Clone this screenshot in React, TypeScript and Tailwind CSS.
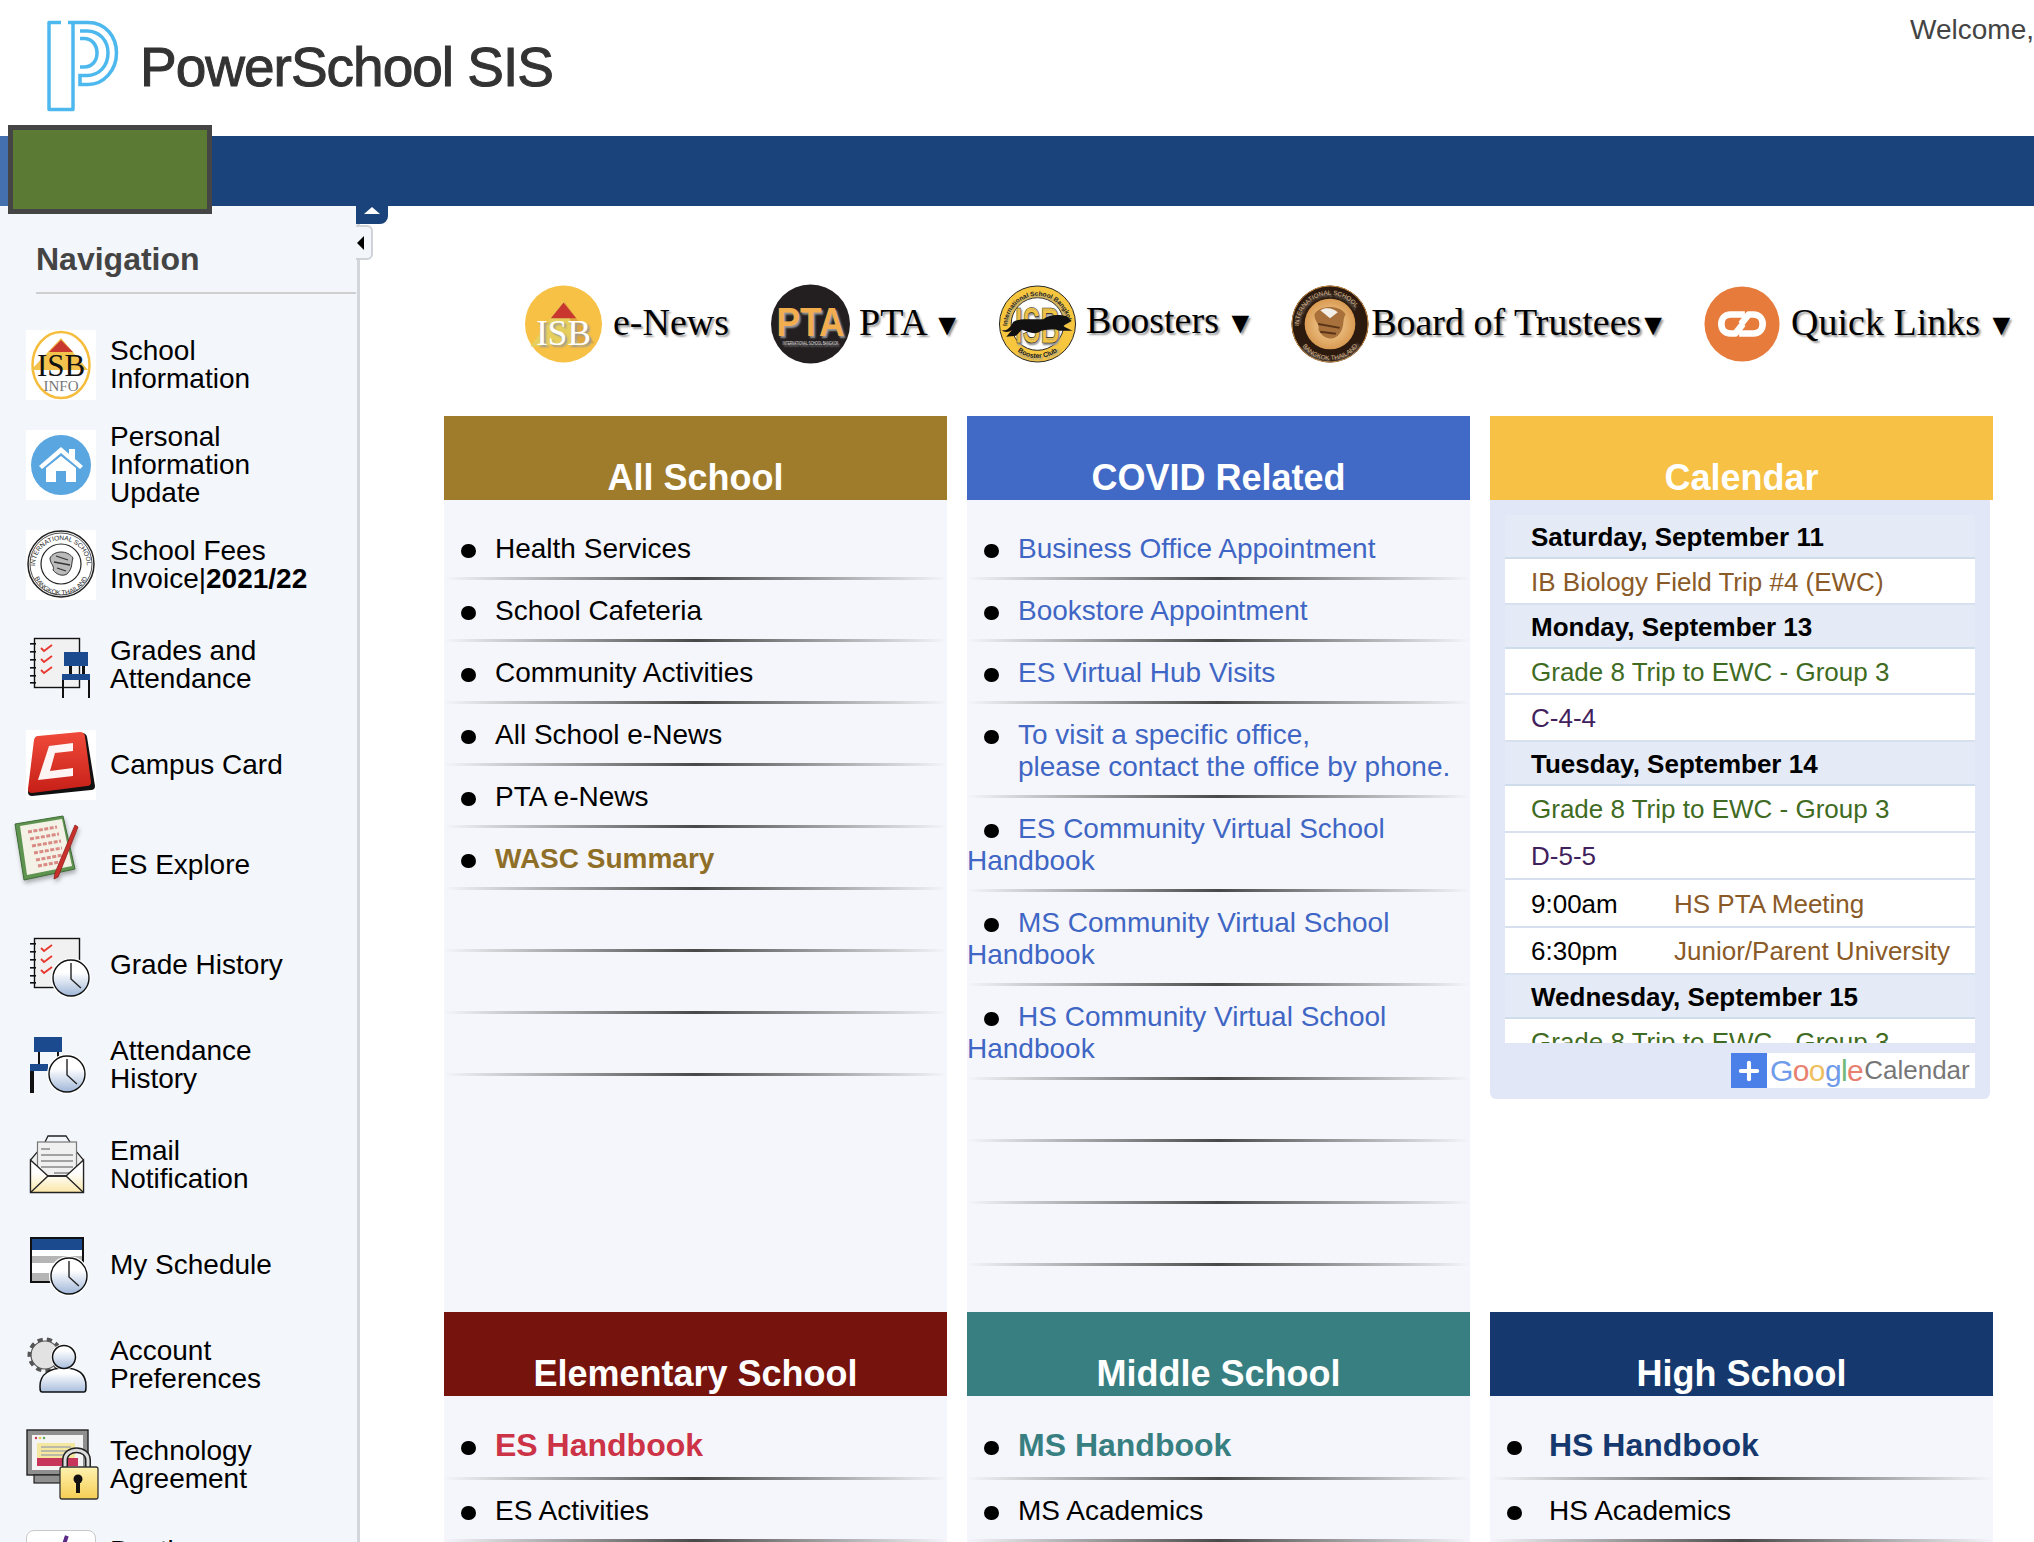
import { Plus } from "lucide-react";
import type { ReactNode } from "react";

const Clock = ({ cx, cy, r }: { cx: number; cy: number; r: number }) => (
  <g>
    <defs>
      <linearGradient id="clockFill" x1="0" y1="0" x2="0" y2="1">
        <stop offset="0.35" stopColor="#ffffff" />
        <stop offset="1" stopColor="#9fb6d8" />
      </linearGradient>
    </defs>
    <circle cx={cx} cy={cy} r={r + 2} fill="#fff" />
    <circle cx={cx} cy={cy} r={r} fill="url(#clockFill)" stroke="#111" strokeWidth="1.4" />
    <path d={`M${cx} ${cy - r + 3}V${cy + 1}L${cx + r * 0.55} ${cy + r * 0.55}`} fill="none" stroke="#222" strokeWidth="1.4" />
  </g>
);

const Checklist = () => (
  <g>
    <rect x="8.5" y="8.5" width="45" height="49" fill="#f1f1f1" stroke="#111" strokeWidth="1.4" />
    {[13, 21, 29, 37, 45, 52].map((y) => (
      <rect key={y} x="4" y={y} width="6" height="1.6" fill="#111" />
    ))}
    {[14, 25, 36].map((y) => (
      <path key={y} d={`M15 ${y + 4}l3 3l8 -6`} fill="none" stroke="#e8372f" strokeWidth="1.8" />
    ))}
  </g>
);

const GradesIcon = () => (
  <svg viewBox="0 0 70 70" className="h-full w-full">
    <Checklist />
    <rect x="38" y="22" width="24" height="14" fill="#1b4a8f" />
    <rect x="43" y="36" width="3" height="9" fill="#111" />
    <rect x="56" y="36" width="3" height="9" fill="#111" />
    <rect x="36" y="44" width="28" height="6" fill="#1b4a8f" />
    <rect x="36" y="50" width="2" height="18" fill="#111" />
    <rect x="62" y="50" width="2" height="18" fill="#111" />
  </svg>
);

const GradeHistoryIcon = () => (
  <svg viewBox="0 0 70 70" className="h-full w-full">
    <Checklist />
    <Clock cx={45} cy={48} r={18} />
  </svg>
);

const AttendanceIcon = () => (
  <svg viewBox="0 0 70 70" className="h-full w-full">
    <rect x="8" y="7" width="28" height="15" fill="#1b4a8f" />
    <rect x="12" y="22" width="2" height="12" fill="#111" />
    <rect x="31" y="22" width="2" height="10" fill="#111" />
    <rect x="4" y="34" width="18" height="7" fill="#1b4a8f" />
    <rect x="4" y="41" width="4" height="22" fill="#111" />
    <Clock cx={41} cy={44} r={18} />
  </svg>
);

const EmailIcon = () => (
  <svg viewBox="0 0 70 70" className="h-full w-full">
    <defs>
      <linearGradient id="envFill" x1="0" y1="0" x2="0" y2="1">
        <stop offset="0.4" stopColor="#ffffff" />
        <stop offset="1" stopColor="#fbe7a8" />
      </linearGradient>
    </defs>
    <path d="M4.5 30L12 21H50L57.5 30V62.5H4.5Z" fill="#eee" stroke="#222" strokeWidth="1.2" />
    <path d="M19 12L22 6H40L44 12" fill="none" stroke="#222" strokeWidth="1.3" />
    <rect x="11.5" y="12" width="39" height="36" fill="#f0f0f0" stroke="#777" strokeWidth="1.2" />
    <path d="M15 19H24M15 25H47M15 31H47M15 37H47M28 43H47" stroke="#888" strokeWidth="1.5" />
    <path d="M4.5 30L22 46L40 46L57.5 30V62.5H4.5Z" fill="url(#envFill)" stroke="#222" strokeWidth="1.3" />
    <path d="M4.5 62.5L22 46H40L57.5 62.5" fill="none" stroke="#222" strokeWidth="1.3" />
  </svg>
);

const ScheduleIcon = () => (
  <svg viewBox="0 0 70 70" className="h-full w-full">
    <rect x="5" y="8" width="52" height="44" fill="#fff" stroke="#111" strokeWidth="2" />
    <rect x="6" y="9" width="50" height="11" fill="#1b4a8f" />
    <rect x="6" y="26" width="50" height="7" fill="#b5b5b5" />
    <rect x="6" y="43" width="50" height="8" fill="#b5b5b5" />
    <Clock cx={43} cy={46} r={18} />
  </svg>
);

const AccountIcon = () => (
  <svg viewBox="0 0 70 70" className="h-full w-full">
    <defs>
      <linearGradient id="userFill" x1="0" y1="0" x2="0" y2="1">
        <stop offset="0.2" stopColor="#ffffff" />
        <stop offset="1" stopColor="#a9bedd" />
      </linearGradient>
    </defs>
    <circle cx="19" cy="25" r="15" fill="none" stroke="#555" strokeWidth="5" strokeDasharray="5 4" />
    <circle cx="19" cy="25" r="14" fill="#e2e2e2" stroke="#555" strokeWidth="1.2" />
    <path d="M16 62C14 62 14 60 14 56C14 44 24 38 38 38C52 38 60 44 60 56C60 60 60 62 58 62Z" fill="url(#userFill)" stroke="#111" strokeWidth="1.5" />
    <circle cx="38" cy="27" r="13" fill="#fff" />
    <circle cx="38" cy="27" r="11.5" fill="url(#userFill)" stroke="#111" strokeWidth="1.5" />
  </svg>
);

const TechIcon = () => (
  <svg viewBox="0 0 70 70" className="h-full w-full overflow-visible">
    <defs>
      <linearGradient id="lockFill" x1="0" y1="0" x2="0" y2="1">
        <stop offset="0" stopColor="#fff3b0" />
        <stop offset="1" stopColor="#f5cd55" />
      </linearGradient>
    </defs>
    <rect x="1" y="0" width="61" height="45" fill="#8f8f8f" stroke="#222" strokeWidth="1.4" />
    <rect x="6" y="5" width="51" height="35" fill="#f3f3f3" />
    <circle cx="10" cy="8" r="1.2" fill="#c8355a" />
    <circle cx="14" cy="8" r="1.2" fill="#e5c84a" />
    <circle cx="18" cy="8" r="1.2" fill="#5aa85a" />
    <rect x="11" y="13" width="38" height="15" fill="#f4e7a0" />
    <path d="M15 17H45M15 21H45M15 25H38" stroke="#aaa" strokeWidth="1.4" />
    <rect x="11" y="28" width="41" height="8" fill="#c8355a" />
    <rect x="8" y="45" width="30" height="8" fill="#8f8f8f" stroke="#222" strokeWidth="1.2" />
    <path d="M39 38V30C39 17 62 17 62 30V38" fill="none" stroke="#222" strokeWidth="6" />
    <path d="M39 38V30C39 17 62 17 62 30V38" fill="none" stroke="#ddd" strokeWidth="3" />
    <rect x="34" y="37" width="38" height="32" rx="2" fill="url(#lockFill)" stroke="#333" strokeWidth="1.3" />
    <circle cx="52" cy="49" r="4.5" fill="#111" />
    <rect x="50" y="50" width="4" height="13" fill="#111" />
  </svg>
);

const ExploreIcon = () => (
  <svg viewBox="0 0 70 70" className="h-[70px] w-[70px] -translate-x-[13px] -translate-y-[15px] overflow-visible drop-shadow-[1px_3px_2px_rgba(0,0,0,0.3)]">
    <path d="M2 9L50 1L62 54L11 65Z" fill="#5f9350" stroke="#3d6b35" strokeWidth="1" />
    <path d="M7 11L49 4L59 51L14 60Z" fill="#f4f2e6" />
    <path d="M15 17L44 12M17 24L46 19M19 31L48 26M21 38L49 33M23 45L50 40M25 51L46 47" stroke="#d98b86" strokeWidth="3" strokeDasharray="4 1.5" />
    <path d="M65 12L45 62L41 64L42 58L62 10Z" fill="#c9302c" stroke="#8f1e1b" strokeWidth="0.8" />
  </svg>
);

const HouseIcon = () => (
  <div className="h-full w-full bg-white">
    <svg viewBox="0 0 70 70" className="h-full w-full">
      <circle cx="35" cy="35" r="30" fill="#5aa6e0" />
      <path d="M13 36L35 17L43 24V19H49V29L57 36L54 39L35 23L16 39Z" fill="#fff" />
      <path d="M20 38L35 26L50 38V52H40V41H30V52H20Z" fill="#fff" />
    </svg>
  </div>
);

const IsbInfoIcon = () => (
  <div className="h-full w-full bg-white">
    <svg viewBox="0 0 70 70" className="h-full w-full">
      <ellipse cx="35" cy="35" rx="28.5" ry="33" fill="#fff" stroke="#f6bd3c" strokeWidth="2.5" />
      <path d="M5 40L35 8L62 40Z" fill="#f3c24d" />
      <path d="M23 22L35 10L47 22Z" fill="#c9382e" />
      <text x="35" y="46" textAnchor="middle" fontFamily="'Liberation Serif', serif" fontSize="31" fill="#111">ISB</text>
      <text x="35" y="61" textAnchor="middle" fontFamily="'Liberation Serif', serif" fontSize="15" fill="#777">INFO</text>
    </svg>
  </div>
);

const SealIcon = () => (
  <div className="h-full w-full bg-white">
    <svg viewBox="0 0 70 70" className="h-full w-full">
      <defs>
        <path id="sealTop" d="M9 36A26 26 0 0 1 61 36" />
        <path id="sealBottom" d="M6 36A29 29 0 0 0 64 36" />
      </defs>
      <circle cx="35" cy="34" r="33" fill="#fff" stroke="#222" strokeWidth="1.5" />
      <circle cx="35" cy="34" r="31" fill="none" stroke="#222" strokeWidth="0.8" />
      <circle cx="35" cy="34" r="20" fill="#fff" stroke="#222" strokeWidth="1.2" />
      <text fontFamily="'Liberation Sans', sans-serif" fontSize="6.5" fill="#222">
        <textPath href="#sealTop">INTERNATIONAL SCHOOL</textPath>
      </text>
      <text fontFamily="'Liberation Sans', sans-serif" fontSize="6.5" fill="#222" textAnchor="middle">
        <textPath href="#sealBottom" startOffset="50%">BANGKOK THAILAND</textPath>
      </text>
      <path d="M24 28C28 20 42 20 47 28C45 34 47 38 41 44C36 47 30 44 27 40C29 36 24 34 24 28Z" fill="#bbb" stroke="#333" strokeWidth="1" />
      <path d="M30 26L42 30M28 32L44 35M31 38L40 41" stroke="#333" strokeWidth="1.3" />
    </svg>
  </div>
);

const CampusIcon = () => (
  <div className="h-full w-full bg-white">
    <svg viewBox="0 0 70 70" className="h-full w-full">
      <defs>
        <linearGradient id="cardFill" x1="0" y1="0" x2="0" y2="1">
          <stop offset="0" stopColor="#ef4b3a" />
          <stop offset="1" stopColor="#c71f18" />
        </linearGradient>
      </defs>
      <path d="M12 8L56 3Q60 3 61 7L69 56Q69 60 65 60L6 66Q2 66 2 62Z" fill="#111" />
      <path d="M12 6L54 2Q58 2 59 6L65 52Q65 56 61 56L6 63Q2 63 2 59L8 10Q9 6 12 6Z" fill="url(#cardFill)" />
      <path d="M47 13L23 16L12 50L47 46L47 38L24 41L29 23L47 21Z" fill="#fff" opacity="0.95" />
    </svg>
  </div>
);

const DestinyIcon = () => (
  <div className="h-full w-full rounded-lg border border-[#c8c8c8] bg-white">
    <svg viewBox="0 0 70 70" className="h-full w-full">
      <path d="M41 5L36 20" stroke="#5b2a86" strokeWidth="4" />
    </svg>
  </div>
);

const navItems: { icon: ReactNode; label: ReactNode }[] = [
  { icon: <IsbInfoIcon />, label: <>School<br />Information</> },
  { icon: <HouseIcon />, label: <>Personal<br />Information<br />Update</> },
  { icon: <SealIcon />, label: <>School Fees<br />Invoice|<b>2021/22</b></> },
  { icon: <GradesIcon />, label: <>Grades and<br />Attendance</> },
  { icon: <CampusIcon />, label: "Campus Card" },
  { icon: <ExploreIcon />, label: "ES Explore" },
  { icon: <GradeHistoryIcon />, label: "Grade History" },
  { icon: <AttendanceIcon />, label: <>Attendance<br />History</> },
  { icon: <EmailIcon />, label: <>Email<br />Notification</> },
  { icon: <ScheduleIcon />, label: "My Schedule" },
  { icon: <AccountIcon />, label: <>Account<br />Preferences</> },
  { icon: <TechIcon />, label: <>Technology<br />Agreement</> },
  { icon: <DestinyIcon />, label: <>Destiny<br />Library</> },
];

const PowerSchoolLogo = () => (
  <svg viewBox="0 0 72 92" className="h-[92px] w-[72px]" fill="none" stroke="#4db8ee" strokeWidth="3.5">
    <path d="M14 2.5H2V89.5H26V3" strokeLinejoin="round" />
    <path d="M21 2.5H41C59 2.5 69.5 17 69.5 33C69.5 50 57 64.5 41 64.5H33V55.5H40C52 55.5 61 46 61 33C61 20 52 11 40 11H33" />
    <path d="M33 18.5H37C45 18.5 50 25 50 33C50 41 45 47 37 47H33" />
  </svg>
);

const IsbBadge = () => (
  <svg viewBox="0 0 80 80" className="h-[78px] w-[79px]">
    <circle cx="40" cy="40" r="39.5" fill="#f6c144" />
    <path d="M6 63L40 16L72 60Z" fill="#e6cf5c" />
    <path d="M40 16L72 60H55Z" fill="#dfa73e" />
    <path d="M27 34L40 18L53 34Z" fill="#c9382e" />
    <text x="40" y="62" textAnchor="middle" fontFamily="'Liberation Serif', serif" fontSize="36" fill="#fff">ISB</text>
  </svg>
);

const PtaBadge = () => (
  <svg viewBox="0 0 80 80" className="h-[80px] w-[81px]">
    <circle cx="40" cy="40" r="39.5" fill="#231f20" />
    <text x="40" y="52" textAnchor="middle" fontFamily="'Liberation Sans', sans-serif" fontWeight="700" fontSize="40" fill="#f2ad4e" textLength="68" lengthAdjust="spacingAndGlyphs">PTA</text>
    <text x="40" y="61" textAnchor="middle" fontFamily="'Liberation Sans', sans-serif" fontSize="4.5" fill="#ddd" textLength="56" lengthAdjust="spacingAndGlyphs">INTERNATIONAL SCHOOL BANGKOK</text>
  </svg>
);

const BoostersBadge = () => (
  <svg viewBox="0 0 80 80" className="h-[78px] w-[79px]">
    <defs>
      <path id="boostTop" d="M9 42A31 31 0 0 1 71 42" />
      <path id="boostBottom" d="M7 42A33 33 0 0 0 73 42" />
    </defs>
    <circle cx="40" cy="40" r="39" fill="#f6c63f" stroke="#222" strokeWidth="1" />
    <circle cx="40" cy="40" r="27" fill="#fff" stroke="#222" strokeWidth="1" />
    <text fontFamily="'Liberation Sans', sans-serif" fontSize="6.6" fontWeight="700" fill="#222">
      <textPath href="#boostTop">International School Bangkok</textPath>
    </text>
    <text fontFamily="'Liberation Sans', sans-serif" fontSize="7" fontWeight="700" fill="#222" textAnchor="middle">
      <textPath href="#boostBottom" startOffset="50%">Booster Club</textPath>
    </text>
    <text x="40" y="59" textAnchor="middle" fontFamily="'Liberation Sans', sans-serif" fontWeight="700" fontSize="52" fill="#f6c63f" stroke="#222" strokeWidth="0.7" textLength="46" lengthAdjust="spacingAndGlyphs">ISB</text>
    <path d="M3 46C8 48 12 44 15 38C22 33 34 36 46 35C52 30 62 30 70 32L75 37L66 42C70 44 74 46 76 47L62 47C56 44 50 46 44 47C38 52 30 48 24 46L18 52L8 53L14 46C10 49 6 49 3 46Z" fill="#111" />
  </svg>
);

const BoardBadge = () => (
  <svg viewBox="0 0 80 80" className="h-[78px] w-[78px]">
    <defs>
      <radialGradient id="boardFill">
        <stop offset="0" stopColor="#f7d8a2" />
        <stop offset="1" stopColor="#d99a52" />
      </radialGradient>
      <path id="boardTop" d="M8 42A32 32 0 0 1 72 42" />
      <path id="boardBottom" d="M5 42A35 35 0 0 0 75 42" />
    </defs>
    <circle cx="40" cy="40" r="39.5" fill="#2c1a0e" />
    <circle cx="40" cy="40" r="39" fill="none" stroke="#c98a3f" strokeWidth="1" />
    <circle cx="40" cy="40" r="26" fill="url(#boardFill)" />
    <text fontFamily="'Liberation Sans', sans-serif" fontSize="6.5" fill="#d9b78a">
      <textPath href="#boardTop">INTERNATIONAL SCHOOL</textPath>
    </text>
    <text fontFamily="'Liberation Sans', sans-serif" fontSize="6.5" fill="#d9b78a" textAnchor="middle">
      <textPath href="#boardBottom" startOffset="50%">BANGKOK THAILAND</textPath>
    </text>
    <path d="M24 30C30 20 50 20 56 30C52 36 56 44 48 52C40 58 32 54 28 46C30 40 24 38 24 30Z" fill="#a8703a" />
    <path d="M30 26C36 22 44 24 48 28L40 34Z" fill="#f2efe8" />
    <path d="M28 40L50 44M30 48L46 50" stroke="#5a3418" strokeWidth="2" />
  </svg>
);

const LinksBadge = () => (
  <svg viewBox="0 0 80 80" className="h-[78px] w-[76px]">
    <circle cx="40" cy="40" r="39.5" fill="#e67b3c" />
    <path d="M43 30H28C15 30 15 50 28 50H33L41 40" fill="none" stroke="#fff" strokeWidth="7" strokeLinejoin="round" />
    <path d="M37 50H52C65 50 65 30 52 30H47L39 40" fill="none" stroke="#fff" strokeWidth="7" strokeLinejoin="round" />
  </svg>
);

const quickLinks = [
  { badge: <IsbBadge />, label: "e-News", arrow: "", gap: "gap-[10px]", lift: "-mt-[4px]" },
  { badge: <PtaBadge />, label: "PTA ", arrow: "▼", gap: "gap-[8px]", lift: "-mt-[4px]" },
  { badge: <BoostersBadge />, label: "Boosters ", arrow: "▼", gap: "gap-[9px]", lift: "-mt-[7px]" },
  { badge: <BoardBadge />, label: "Board of Trustees", arrow: "▼", gap: "gap-[2px]", lift: "-mt-[4px]" },
  { badge: <LinksBadge />, label: "Quick Links ", arrow: "▼", gap: "gap-[11px]", lift: "-mt-[4px]" },
];

const Divider = () => (
  <div className="h-[3px] bg-[linear-gradient(to_right,transparent,#484848_50%,transparent)]" />
);

const Row = ({ children, big, wide }: { children?: ReactNode; big?: boolean; wide?: boolean }) => (
  <li>
    <div className={big ? "min-h-[63px] pt-[13px] pb-[14px] text-[32px] leading-[36px] font-bold" : "min-h-[59px] pt-[15px] pb-[12px] text-[28px] leading-[32px]"}>
      {children && (
        <span className={`ml-[17px] inline-block h-[14px] w-[15px] rounded-full bg-black align-middle blur-[0.5px] ${wide ? "mr-[27px]" : "mr-[19px]"}`} />
      )}
      {children}
    </div>
    <Divider />
  </li>
);

const ColumnHeader = ({ title, color }: { title: string; color: string }) => (
  <div className={`flex h-[84px] items-end justify-center pb-[2px] text-[36px] leading-[40px] font-bold text-white ${color}`}>
    {title}
  </div>
);

const calendar = [
  { head: "Saturday, September 11" },
  { text: "IB Biology Field Trip #4 (EWC)", color: "text-[#8a5a28]", h: "h-[46px]" },
  { head: "Monday, September 13" },
  { text: "Grade 8 Trip to EWC - Group 3", color: "text-[#3f6b22]", h: "h-[46px]" },
  { text: "C-4-4", color: "text-[#41215c]", h: "h-[47px]" },
  { head: "Tuesday, September 14" },
  { text: "Grade 8 Trip to EWC - Group 3", color: "text-[#3f6b22]", h: "h-[47px]" },
  { text: "D-5-5", color: "text-[#41215c]", h: "h-[47px]" },
  { time: "9:00am", text: "HS PTA Meeting", color: "text-[#8a5a28]", h: "h-[48px]" },
  { time: "6:30pm", text: "Junior/Parent University", color: "text-[#8a5a28]", h: "h-[47px]" },
  { head: "Wednesday, September 15" },
  { text: "Grade 8 Trip to EWC - Group 3", color: "text-[#3f6b22]", h: "h-[47px]" },
];

const CalendarBox = () => (
  <div className="w-[500px] rounded-b-md bg-[#e2e7f8] px-[15px] pt-[15px] pb-[11px] text-[26px]">
    <div className="h-[528px] overflow-hidden">
      {calendar.map((row, i) =>
        row.head ? (
          <div key={i} className="flex h-[44px] items-center border-b-2 border-[#cfdcec] bg-[#e4eaf6] pt-[2px] pl-[26px] font-bold text-black">
            {row.head}
          </div>
        ) : (
          <div key={i} className={`flex items-center border-b-2 border-[#d6e0ee] bg-white pt-[2px] pl-[26px] ${row.h}`}>
            {row.time && <span className="w-[143px] text-black">{row.time}</span>}
            <span className={row.color}>{row.text}</span>
          </div>
        ),
      )}
    </div>
    <div className="mt-[10px] ml-auto flex h-[35px] w-[244px] items-center bg-white">
      <span className="flex h-full w-[36px] items-center justify-center bg-[#4a80e8] text-white">
        <Plus size={28} strokeWidth={3.5} />
      </span>
      <span className="ml-[3px] text-[30px] leading-[30px] tracking-[-0.6px]">
        <span className="text-[#6f9be8]">G</span>
        <span className="text-[#e88070]">o</span>
        <span className="text-[#f0c060]">o</span>
        <span className="text-[#6f9be8]">g</span>
        <span className="text-[#70b878]">l</span>
        <span className="text-[#e88070]">e</span>
      </span>
      <span className="ml-[1px] text-[#777]">Calendar</span>
    </div>
  </div>
);

export default function App() {
  return (
    <div className="h-screen w-full overflow-hidden bg-white font-['Liberation_Sans',Arial,sans-serif] text-black">
      <header className="flex h-[136px] items-start justify-between">
        <div className="flex items-start">
          <div className="mt-[20px] ml-[47px]">
            <PowerSchoolLogo />
          </div>
          <div className="mt-[37px] ml-[21px] text-[55px] leading-[60px] tracking-[-1px] text-[#333] [-webkit-text-stroke:1px_#333]">
            PowerSchool SIS
          </div>
        </div>
        <div className="mt-[14px] text-[28px] leading-[32px] whitespace-nowrap text-[#444]">Welcome,</div>
      </header>

      <div className="relative z-10 h-[70px] bg-[#19437a]">
        <div className="h-full w-[8px] bg-[#4470b0]" />
        <div className="absolute -top-[11px] left-[8px] h-[89px] w-[204px] border-[5px] border-[#454545] bg-[#5b7a34]" />
      </div>

      <div className="flex">
        <aside className="relative h-[1336px] w-[360px] shrink-0 border-r-[3px] border-[#d3d6da] bg-[#f3f6fb]">
          <div className="absolute top-0 -right-[31px] flex h-[18px] w-[32px] justify-center rounded-br-lg bg-[#19437a]">
            <span className="mt-[1px] h-0 w-0 border-x-[8px] border-b-[7px] border-x-transparent border-b-white" />
          </div>
          <div className="absolute top-[19px] -right-[16px] flex h-[35px] w-[17px] items-center rounded-r-md border-2 border-l-0 border-[#cfd3d8] bg-[#f3f6fb]">
            <span className="ml-[1px] h-0 w-0 border-y-[7px] border-r-[7px] border-y-transparent border-r-black" />
          </div>
          <h2 className="ml-[36px] pt-[35px] text-[32px] leading-[36px] font-bold text-[#444]">Navigation</h2>
          <div className="mt-[15px] ml-[36px] h-[2px] w-[320px] bg-[#cfcfcf]" />
          <ul className="mt-[21px]">
            {navItems.map((item, i) => (
              <li key={i} className="flex h-[100px] items-center gap-[14px] pl-[26px] text-[28px] leading-[28px]">
                <span className="block h-[70px] w-[70px] shrink-0">{item.icon}</span>
                <span>{item.label}</span>
              </li>
            ))}
          </ul>
        </aside>

        <main className="min-w-0 flex-1 pt-[79px] pl-[84px]">
          <div className="ml-[80px] flex h-[78px] items-center gap-[41px] font-['Liberation_Serif',serif] text-[38px] whitespace-nowrap [text-shadow:2px_2px_2px_#999]">
            {quickLinks.map((link) => (
              <div key={link.label} className={`flex items-center ${link.gap}`}>
                {link.badge}
                <span className={`whitespace-pre ${link.lift}`}>
                  {link.label}
                  {link.arrow && <span className="-mr-[5px] -ml-[3px] text-[30px]">{link.arrow}</span>}
                </span>
              </div>
            ))}
          </div>

          <div className="mt-[53px] grid grid-cols-[503px_503px_503px] grid-rows-[896px_auto] gap-x-[20px]">
            <section className="flex flex-col">
              <ColumnHeader title="All School" color="bg-[#9f7c2b]" />
              <ul className="flex-1 bg-[#f5f6fb] pt-[18px]">
                <Row>Health Services</Row>
                <Row>School Cafeteria</Row>
                <Row>Community Activities</Row>
                <Row>All School e-News</Row>
                <Row>PTA e-News</Row>
                <Row><b className="text-[#8f6f27]">WASC Summary</b></Row>
                <Row />
                <Row />
                <Row />
              </ul>
            </section>

            <section className="flex flex-col">
              <ColumnHeader title="COVID Related" color="bg-[#4169c6]" />
              <ul className="flex-1 bg-[#f5f6fb] pt-[18px] text-[#3f66c4]">
                <Row>Business Office Appointment</Row>
                <Row>Bookstore Appointment</Row>
                <Row>ES Virtual Hub Visits</Row>
                <Row>
                  To visit a specific office,
                  <span className="block pl-[51px]">please contact the office by phone.</span>
                </Row>
                <Row>ES Community Virtual School Handbook</Row>
                <Row>MS Community Virtual School Handbook</Row>
                <Row>HS Community Virtual School Handbook</Row>
                <Row />
                <Row />
                <Row />
              </ul>
            </section>

            <section>
              <ColumnHeader title="Calendar" color="bg-[#f6c144]" />
              <CalendarBox />
            </section>

            <section>
              <ColumnHeader title="Elementary School" color="bg-[#75130c]" />
              <ul className="bg-[#f5f6fb] pt-[18px]">
                <Row big><span className="text-[#cc3347]">ES Handbook</span></Row>
                <Row>ES Activities</Row>
              </ul>
            </section>

            <section>
              <ColumnHeader title="Middle School" color="bg-[#387f82]" />
              <ul className="bg-[#f5f6fb] pt-[18px]">
                <Row big><span className="text-[#387f82]">MS Handbook</span></Row>
                <Row>MS Academics</Row>
              </ul>
            </section>

            <section>
              <ColumnHeader title="High School" color="bg-[#15396e]" />
              <ul className="bg-[#f5f6fb] pt-[18px]">
                <Row big wide><span className="text-[#15396e]">HS Handbook</span></Row>
                <Row wide>HS Academics</Row>
              </ul>
            </section>
          </div>
        </main>
      </div>
    </div>
  );
}
